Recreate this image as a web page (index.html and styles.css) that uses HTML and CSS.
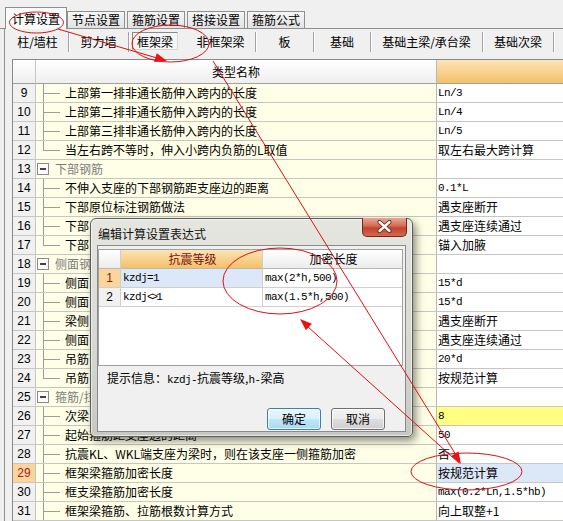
FILE: index.html
```html
<!DOCTYPE html>
<html>
<head>
<meta charset="utf-8">
<link rel="stylesheet" href="styles.css">
</head>
<body>
<div class="app">
  <div class="tabs">
    <div class="tab active">计算设置</div>
    <div class="tab">节点设置</div>
    <div class="tab">箍筋设置</div>
    <div class="tab">搭接设置</div>
    <div class="tab">箍筋公式</div>
  </div>
  <div class="page">
    <div class="subtabs">
      <div class="st w62">柱/墙柱</div>
      <div class="st w60">剪力墙</div>
      <div class="st w57 nosep"><span class="pressed">框架梁</span></div>
      <div class="st w70">非框架梁</div>
      <div class="st w58">板</div>
      <div class="st w57">基础</div>
      <div class="st w112">基础主梁/承台梁</div>
      <div class="st w71">基础次梁</div>
    </div>
    <div class="grid">
      <div class="row head"><div class="c num"></div><div class="c name">类型名称</div><div class="c val"></div></div>
      <div class="row"><div class="c num">9</div><div class="c name t">上部第一排非通长筋伸入跨内的长度</div><div class="c val mono">Ln/3</div></div>
      <div class="row"><div class="c num">10</div><div class="c name t">上部第二排非通长筋伸入跨内的长度</div><div class="c val mono">Ln/4</div></div>
      <div class="row"><div class="c num">11</div><div class="c name t">上部第三排非通长筋伸入跨内的长度</div><div class="c val mono">Ln/5</div></div>
      <div class="row"><div class="c num">12</div><div class="c name t last">当左右跨不等时，伸入小跨内负筋的L取值</div><div class="c val">取左右最大跨计算</div></div>
      <div class="row"><div class="c num">13</div><div class="c name g"><span class="box"></span>下部钢筋</div><div class="c val"></div></div>
      <div class="row"><div class="c num">14</div><div class="c name t">不伸入支座的下部钢筋距支座边的距离</div><div class="c val mono">0.1*L</div></div>
      <div class="row"><div class="c num">15</div><div class="c name t">下部原位标注钢筋做法</div><div class="c val">遇支座断开</div></div>
      <div class="row"><div class="c num">16</div><div class="c name t">下部</div><div class="c val">遇支座连续通过</div></div>
      <div class="row"><div class="c num">17</div><div class="c name t last">下部</div><div class="c val">锚入加腋</div></div>
      <div class="row"><div class="c num">18</div><div class="c name g"><span class="box"></span>侧面钢</div><div class="c val"></div></div>
      <div class="row"><div class="c num">19</div><div class="c name t">侧面</div><div class="c val mono">15*d</div></div>
      <div class="row"><div class="c num">20</div><div class="c name t">侧面</div><div class="c val mono">15*d</div></div>
      <div class="row"><div class="c num">21</div><div class="c name t">梁侧</div><div class="c val">遇支座断开</div></div>
      <div class="row"><div class="c num">22</div><div class="c name t">侧面</div><div class="c val">遇支座连续通过</div></div>
      <div class="row"><div class="c num">23</div><div class="c name t">吊筋</div><div class="c val mono">20*d</div></div>
      <div class="row"><div class="c num">24</div><div class="c name t last">吊筋</div><div class="c val">按规范计算</div></div>
      <div class="row"><div class="c num">25</div><div class="c name g"><span class="box"></span>箍筋/拉</div><div class="c val"></div></div>
      <div class="row"><div class="c num">26</div><div class="c name t">次梁</div><div class="c val mono hl">8</div></div>
      <div class="row"><div class="c num">27</div><div class="c name t">起始箍筋距支座边的距离</div><div class="c val mono">50</div></div>
      <div class="row"><div class="c num">28</div><div class="c name t">抗震KL、WKL端支座为梁时，则在该支座一侧箍筋加密</div><div class="c val">否</div></div>
      <div class="row"><div class="c num sel">29</div><div class="c name t">框架梁箍筋加密长度</div><div class="c val cur">按规范计算</div></div>
      <div class="row"><div class="c num">30</div><div class="c name t">框支梁箍筋加密长度</div><div class="c val mono">max(0.2*Ln,1.5*hb)</div></div>
      <div class="row"><div class="c num">31</div><div class="c name t">框架梁箍筋、拉筋根数计算方式</div><div class="c val">向上取整+1</div></div>
    </div>
  </div>

  <div class="dialog">
    <div class="dtitle">编辑计算设置表达式</div>
    <div class="close"><svg width="45" height="19" viewBox="0 0 45 19"><path d="M17.5 5 L27.5 14 M27.5 5 L17.5 14" stroke="#6a2418" stroke-width="4.2" stroke-linecap="round"/><path d="M17.5 5 L27.5 14 M27.5 5 L17.5 14" stroke="#ffffff" stroke-width="2.4" stroke-linecap="round"/></svg></div>
    <div class="client">
      <div class="dgrid">
        <div class="drow dhead"><div class="dc dn"></div><div class="dc d1">抗震等级</div><div class="dc d2">加密长度</div></div>
        <div class="drow"><div class="dc dn dsel">1</div><div class="dc d1 dcur mono">kzdj=1</div><div class="dc d2 mono">max(2*h,500)</div></div>
        <div class="drow"><div class="dc dn">2</div><div class="dc d1 mono">kzdj<span class="ne">&lt;&gt;</span>1</div><div class="dc d2 mono">max(1.5*h,500)</div></div>
      </div>
      <div class="hint">提示信息：<span class="mono">kzdj-</span>抗震等级,<span class="mono">h-</span>梁高</div>
      <div class="btns">
        <div class="btn ok">确定</div>
        <div class="btn">取消</div>
      </div>
    </div>
  </div>

  <svg class="marks" width="563" height="521" viewBox="0 0 563 521">
    <g fill="none" stroke="#dd1111" stroke-width="1">
      <ellipse cx="36.5" cy="22.5" rx="27" ry="10.5"/>
      <ellipse cx="170.5" cy="43.5" rx="38.5" ry="18.5"/>
      <ellipse cx="280" cy="281" rx="57" ry="33"/>
      <ellipse cx="466.5" cy="471.5" rx="55.5" ry="18.5"/>
      <line x1="58" y1="29" x2="157" y2="58"/>
      <line x1="213" y1="61" x2="456" y2="455"/>
      <line x1="307" y1="326" x2="459" y2="463"/>
    </g>
    <g fill="#ee1111">
      <polygon points="167,61 154.2,61.9 156.8,53.3"/>
      <polygon points="300,319 311.9,323.7 305.9,330.3"/>
      <polygon points="461,464 450.9,456.2 458.5,451.5"/>
    </g>
  </svg>
</div>
</body>
</html>
```

FILE: styles.css
```css
* { box-sizing: border-box; }
html, body { margin: 0; padding: 0; }
body {
  width: 563px;
  height: 521px;
  overflow: hidden;
  background: #f0f0f0;
  font-family: "Noto Sans CJK SC", "Liberation Sans", sans-serif;
  font-size: 12px;
  color: #000;
}
.app { position: relative; width: 563px; height: 521px; overflow: hidden; }

/* top tabs */
.tabs {
  display: flex;
  align-items: flex-end;
  height: 29px;
  padding-left: 5px;
  border-bottom: 1px solid #8e8f8f;
}
.tab {
  width: 58px;
  height: 17px;
  margin-right: 2px;
  border: 1px solid #8e8f8f;
  border-bottom: none;
  background: linear-gradient(#f6f6f6, #e2e2e2);
  text-align: center;
  line-height: 15px;
}
.tab.active {
  width: 62px;
  height: 22px;
  margin-right: 0;
  margin-bottom: -1px;
  background: #fbfbfb;
  line-height: 21px;
  position: relative;
  z-index: 1;
}

/* page */
.page {
  margin-left: 4px;
  border-left: 1px solid #8e8f8f;
  height: 492px;
}
.subtabs {
  display: flex;
  height: 30px;
  padding: 3px 0 0 2px;
}
.st {
  height: 20px;
  line-height: 20px;
  text-align: center;
  border-right: 1px solid #a3a3a3;
  box-shadow: 1px 0 0 #ffffff;
}
.st.nosep { border-right: none; box-shadow: none; text-align: left; padding-left: 3px; }
.pressed {
  display: inline-block;
  width: 46px;
  height: 18px;
  line-height: 17px;
  text-align: center;
  border: 1px solid #8a8a8a;
  border-right-color: #d8d8d8;
  border-bottom-color: #d8d8d8;
  background: #f6f6f6;
}
.w57 { width: 57px; }
.w58 { width: 58px; }
.w60 { width: 60px; }
.w62 { width: 62px; }
.w70 { width: 70px; }
.w71 { width: 71px; }
.w112 { width: 112px; }

/* main grid */
.grid {
  margin-left: 7px;
  border-left: 1px solid #8a8a8a;
  border-top: 1px solid #8a8a8a;
}
.row { display: flex; height: 19px; }
.c {
  border-right: 1px solid #c6c6c2;
  border-bottom: 1px solid #c6c6c2;
  line-height: 18px;
  white-space: nowrap;
  overflow: hidden;
}
.num {
  width: 23px;
  flex: none;
  text-align: center;
  background: #f1f1f1;
  font-family: "Liberation Sans", sans-serif;
  font-size: 12px;
}
.num.sel { background: #fcd59b; color: #a02626; }
.name {
  width: 401px;
  flex: none;
  background: #ffffe7;
  position: relative;
  padding-left: 29px;
  border-right-color: #b8b8b8;
}
.val { width: 140px; flex: none; background: #fff; padding-left: 1px; }
.val.hl { background: #ffff80; }
.val.cur { background: #dce7f7; }
.mono {
  font-family: "Liberation Mono", monospace;
  font-size: 11px;
  letter-spacing: -0.6px;
}
.ne { letter-spacing: -2px; }

.head { height: 24px; }
.head .c {
  line-height: 23px;
  border-bottom-color: #a0a0a0;
  background: linear-gradient(#ffffff, #efefef);
}
.head .name { padding-left: 0; text-align: center; }
.head .val { background: linear-gradient(#fce4b6, #f4c068); }

/* tree lines */
.name.t::before {
  content: "";
  position: absolute;
  left: 7px;
  top: 0;
  bottom: -1px;
  width: 1px;
  background: #9c9c9c;
}
.name.t.last::before { bottom: 9px; }
.name.t::after {
  content: "";
  position: absolute;
  left: 7px;
  top: 9px;
  width: 17px;
  height: 1px;
  background: #9c9c9c;
}
.name.g { padding-left: 19px; color: #7d7d7d; }
.box {
  position: absolute;
  left: 1px;
  top: 3px;
  width: 12px;
  height: 12px;
  border: 1px solid #8a8a8a;
  background: #fbfbfb;
}
.box::after {
  content: "";
  position: absolute;
  left: 2px;
  top: 4px;
  width: 6px;
  height: 2px;
  background: #444;
}

/* dialog */
.dialog {
  position: absolute;
  left: 90px;
  top: 218px;
  width: 323px;
  height: 219px;
  border: 1px solid #5c5c5c;
  border-radius: 6px 6px 5px 5px;
  background: linear-gradient(180deg, #e6e6e0 0%, #d8d9d3 55%, #c7c8c1 100%);
  box-shadow: 3px 4px 8px rgba(0, 0, 0, 0.45), inset 0 0 0 1px rgba(255, 255, 255, 0.55);
  padding: 0 6px 4px 6px;
  display: flex;
  flex-direction: column;
  z-index: 5;
}
.dtitle {
  height: 26px;
  padding: 4px 0 0 1px;
  line-height: 22px;
  color: #111;
}
.close {
  position: absolute;
  top: -1px;
  right: 5px;
  width: 45px;
  height: 19px;
  border: 1px solid #6f2a1d;
  border-top: none;
  border-radius: 0 0 5px 5px;
  background: linear-gradient(#e9a795 0%, #d56a52 45%, #c2432b 55%, #d46a4f 100%);
}
.close svg { display: block; margin: -1px 0 0 -1px; }
.client {
  height: 187px;
  border: 1px solid #8a8a8a;
  background: #f0f0f0;
  padding: 3px 2px 0 0;
  display: flex;
  flex-direction: column;
}
.dgrid {
  height: 117px;
  border: 1px solid #a0a0a0;
  background: #fff;
  flex: none;
}
.drow { display: flex; height: 19px; }
.dc {
  border-right: 1px solid #cfcfcf;
  border-bottom: 1px solid #cfcfcf;
  line-height: 18px;
  white-space: nowrap;
  overflow: hidden;
  padding-left: 2px;
}
.dn { width: 22px; text-align: center; padding-left: 0; background: #f1f1f1; font-family: "Liberation Sans", sans-serif; }
.dn.dsel { background: #fcd59b; color: #8a1a1a; }
.d1 { width: 142px; }
.d2 { width: 139px; border-right: none; }
.dcur { background: #dce7f7; }
.dhead .dc { text-align: center; border-bottom-color: #b9b9b9; background: linear-gradient(#ffffff, #ececec); }
.dhead .d1 { background: linear-gradient(#fce4b6, #f4c068); color: #7a1010; }
.hint { padding: 5px 0 0 9px; line-height: 14px; }
.btns {
  display: flex;
  justify-content: flex-end;
  gap: 10px;
  margin-top: 21px;
  padding-right: 18px;
}
.btn {
  width: 54px;
  height: 22px;
  line-height: 20px;
  text-align: center;
  border: 1px solid #707070;
  border-radius: 3px;
  background: linear-gradient(#f2f2f2 0%, #ebebeb 48%, #dddddd 52%, #cfcfcf 100%);
  box-shadow: inset 0 0 0 1px rgba(255, 255, 255, 0.7);
}
.btn.ok {
  border-color: #3c7fb1;
  background: linear-gradient(#eaf6fd 0%, #d9f0fc 48%, #bee6fd 52%, #a7d9f5 100%);
}

/* annotations */
.marks {
  position: absolute;
  left: 0;
  top: 0;
  z-index: 10;
  pointer-events: none;
}
```
